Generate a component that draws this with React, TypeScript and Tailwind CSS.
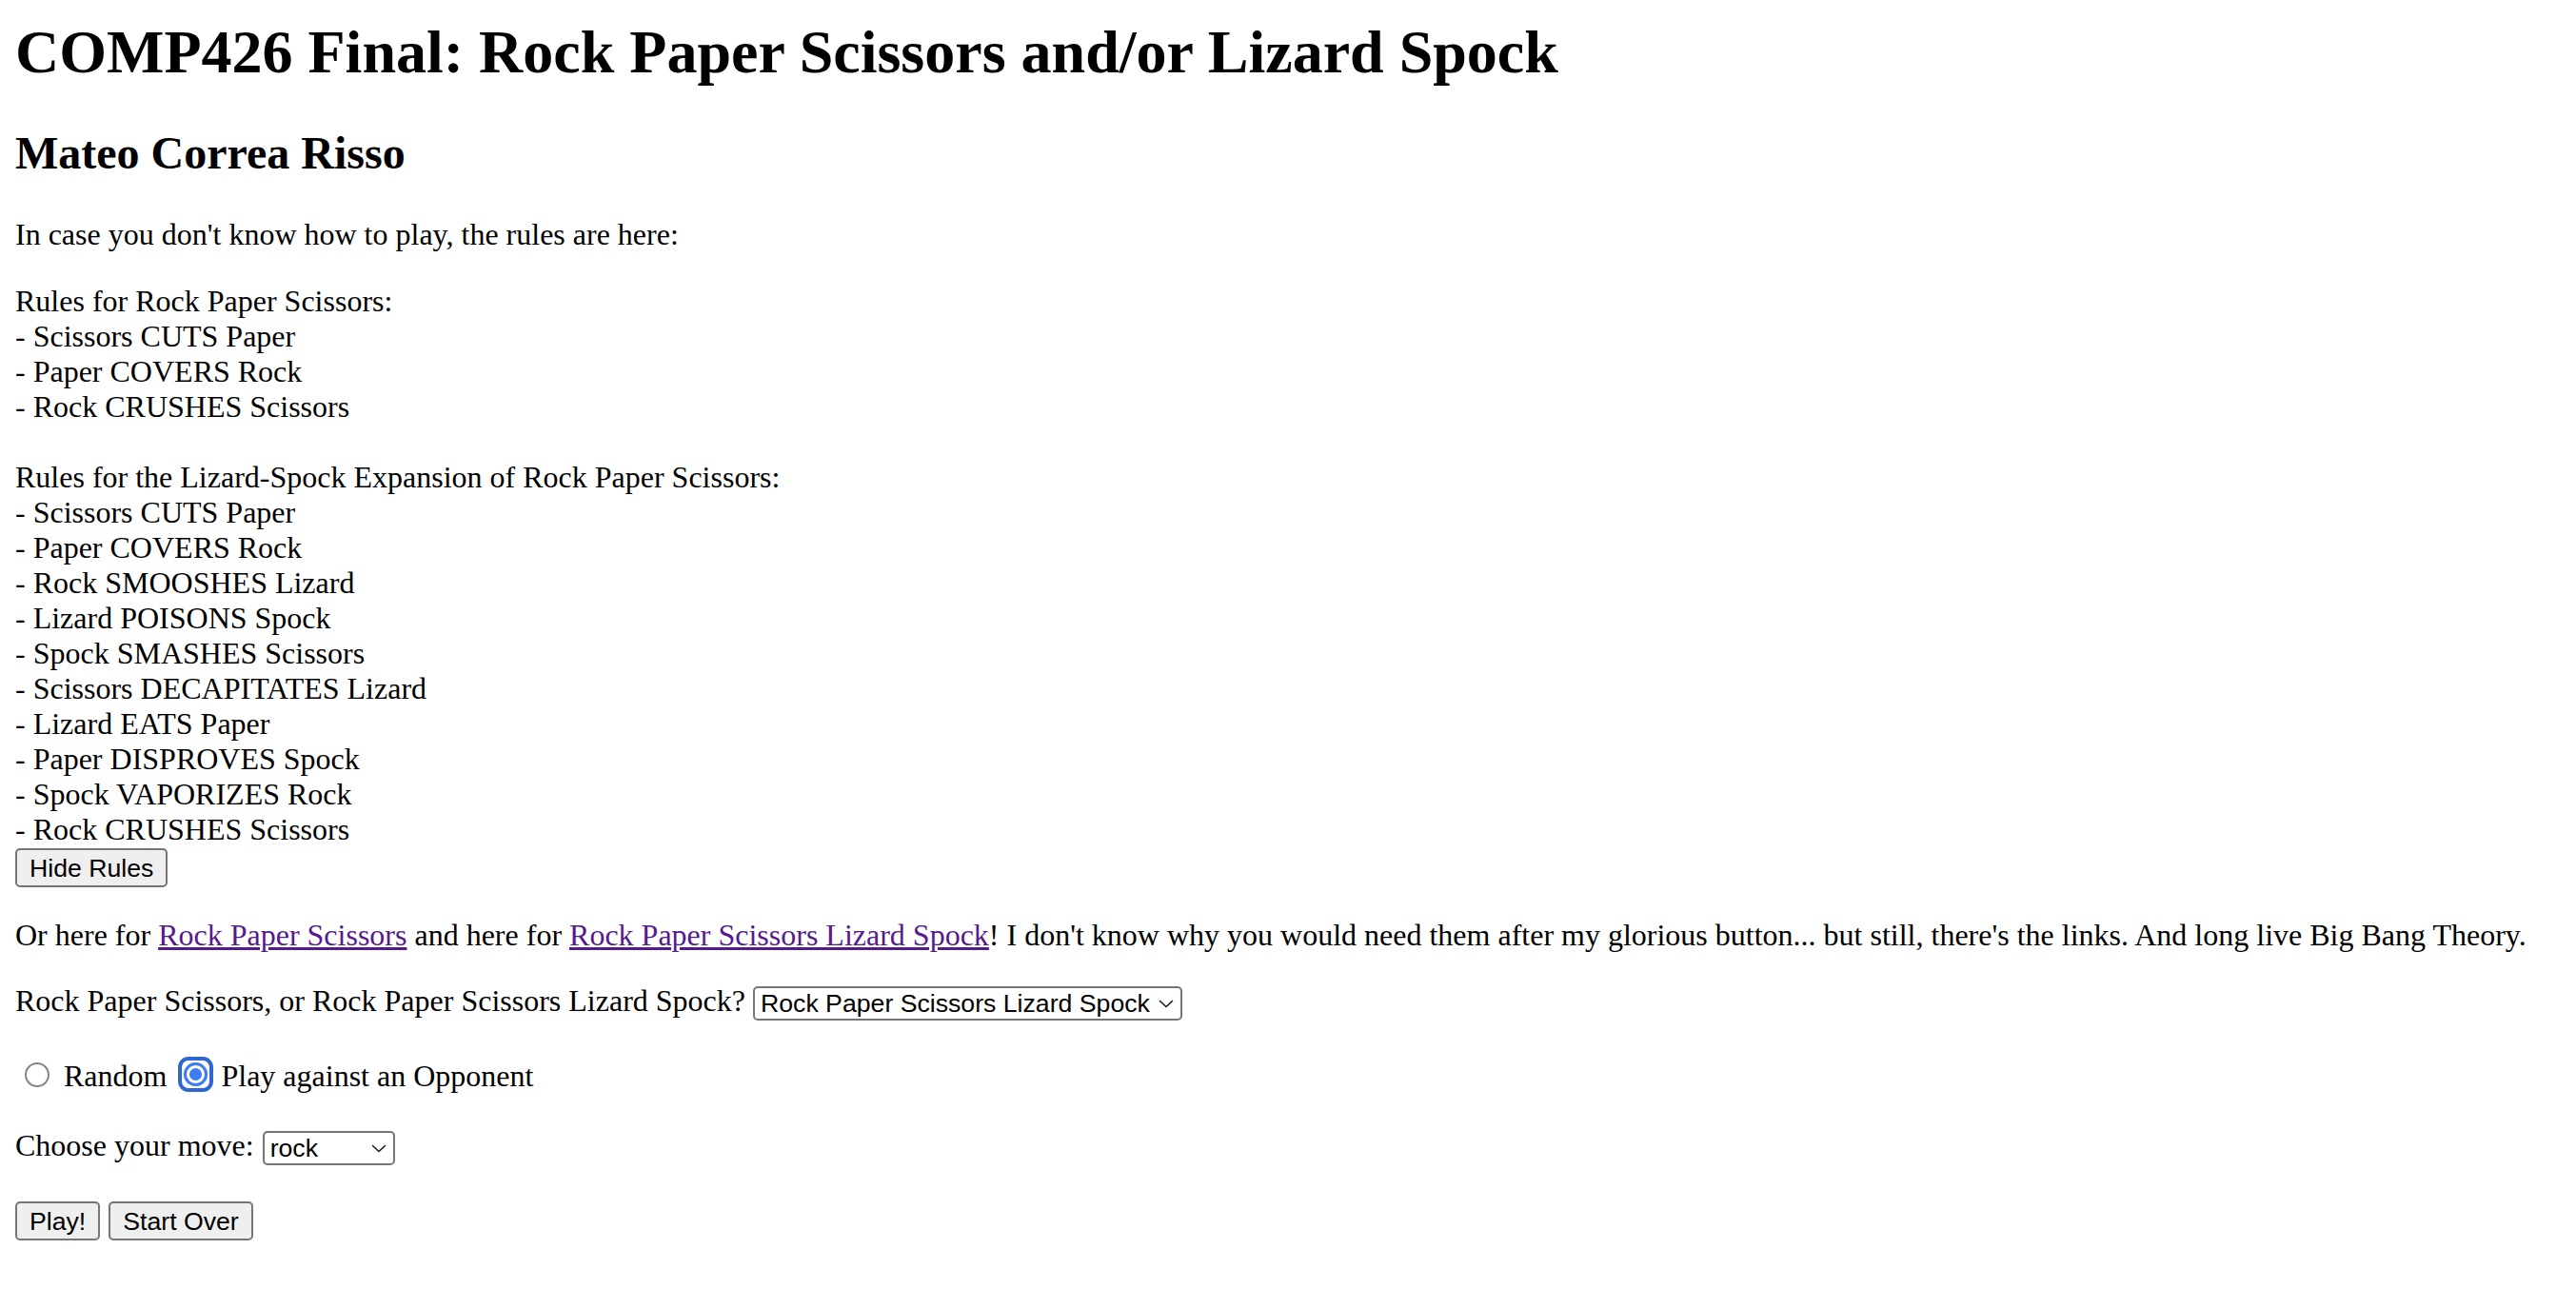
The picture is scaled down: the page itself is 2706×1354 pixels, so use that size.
import React from "react";

const rpsRules = ["- Scissors CUTS Paper", "- Paper COVERS Rock", "- Rock CRUSHES Scissors"];
const rpslsRules = [
  "- Scissors CUTS Paper",
  "- Paper COVERS Rock",
  "- Rock SMOOSHES Lizard",
  "- Lizard POISONS Spock",
  "- Spock SMASHES Scissors",
  "- Scissors DECAPITATES Lizard",
  "- Lizard EATS Paper",
  "- Paper DISPROVES Spock",
  "- Spock VAPORIZES Rock",
  "- Rock CRUSHES Scissors",
];

function Chevron() {
  return (
    <svg
      className="pointer-events-none absolute right-[9px] top-[14px] w-[16px] h-[9px]"
      viewBox="0 0 16 9"
      fill="none"
    >
      <path d="M1.5 1.5 L8 7.5 L14.5 1.5" stroke="#1a1a1a" strokeWidth="1.6" strokeLinecap="round" strokeLinejoin="round" />
    </svg>
  );
}

function FakeSelect({ className, value, options }: { className: string; value: string; options: string[] }) {
  return (
    <span className={"relative block mt-[3px] " + className}>
      <select
        defaultValue={value}
        className="appearance-none block h-[36px] w-full rounded-[5px] border-2 border-[#767676] bg-white pl-[6px] pr-[28px] font-['Liberation_Sans',Arial,sans-serif] text-[26.67px] leading-[30px] text-black outline-none"
      >
        {options.map((o) => (
          <option key={o} value={o}>
            {o}
          </option>
        ))}
      </select>
      <Chevron />
    </span>
  );
}

const btn =
  "h-[41px] px-[13px] rounded-[5px] border-2 border-[#767676] bg-[#efefef] font-['Liberation_Sans',Arial,sans-serif] text-[26.67px] leading-[30px] text-black";

export default function App() {
  return (
    <div className="min-h-screen bg-white px-[16px] pt-[18px] text-black font-['Liberation_Serif','Times_New_Roman',serif] text-[32px] leading-[37px]">
      <h1 className="m-0 text-[64px] font-bold leading-[74px] whitespace-nowrap">
        COMP426 Final: Rock Paper Scissors and/or Lizard Spock
      </h1>
      <h2 className="mt-[41px] mb-0 text-[48px] font-bold leading-[55px]">Mateo Correa Risso</h2>
      <p className="mt-[40px]">In case you don't know how to play, the rules are here:</p>

      <div className="mt-[33px]">
        <div>Rules for Rock Paper Scissors:</div>
        {rpsRules.map((r, i) => (
          <div key={"a" + i}>{r}</div>
        ))}
        <div className="h-[37px]" />
        <div>Rules for the Lizard-Spock Expansion of Rock Paper Scissors:</div>
        {rpslsRules.map((r, i) => (
          <div key={"b" + i}>{r}</div>
        ))}
        <button className={"block mt-[1px] " + btn}>Hide Rules</button>
      </div>

      <p className="mt-[32px] whitespace-nowrap">
        Or here for{" "}
        <a href="#" className="text-[#551a8b] underline">
          Rock Paper Scissors
        </a>{" "}
        and here for{" "}
        <a href="#" className="text-[#551a8b] underline">
          Rock Paper Scissors Lizard Spock
        </a>
        ! I don't know why you would need them after my glorious button... but still, there's the links. And long
        live Big Bang Theory.
      </p>

      <div className="mt-[32px] flex items-start">
        <span>Rock Paper Scissors, or Rock Paper Scissors Lizard Spock?</span>
        <FakeSelect
          className="ml-[8px] w-[451px]"
          value="Rock Paper Scissors Lizard Spock"
          options={["Rock Paper Scissors", "Rock Paper Scissors Lizard Spock"]}
        />
      </div>

      <div className="mt-[40px] flex items-start">
        <input
          type="radio"
          name="mode"
          className="appearance-none ml-[10px] mt-[4px] w-[26px] h-[26px] rounded-full border-2 border-[#858585] bg-white"
        />
        <span className="ml-[15px]">Random</span>
        <span className="ml-[12px] -mt-[2px] flex h-[37px] w-[37px] items-center justify-center rounded-[11px] border-4 border-[#2f66d4]">
          <input
            type="radio"
            name="mode"
            defaultChecked
            className="appearance-none block w-[25px] h-[25px] rounded-full bg-[#3b7cf3] shadow-[inset_0_0_0_3px_#3b7cf3,inset_0_0_0_6px_#ffffff]"
          />
        </span>
        <span className="ml-[8px]">Play against an Opponent</span>
      </div>

      <div className="mt-[36px] flex items-start">
        <span>Choose your move:</span>
        <FakeSelect
          className="ml-[9px] w-[139px]"
          value="rock"
          options={["rock", "paper", "scissors", "lizard", "spock"]}
        />
      </div>

      <div className="mt-[38px] flex gap-[9px]">
        <button className={btn}>Play!</button>
        <button className={btn}>Start Over</button>
      </div>
    </div>
  );
}
